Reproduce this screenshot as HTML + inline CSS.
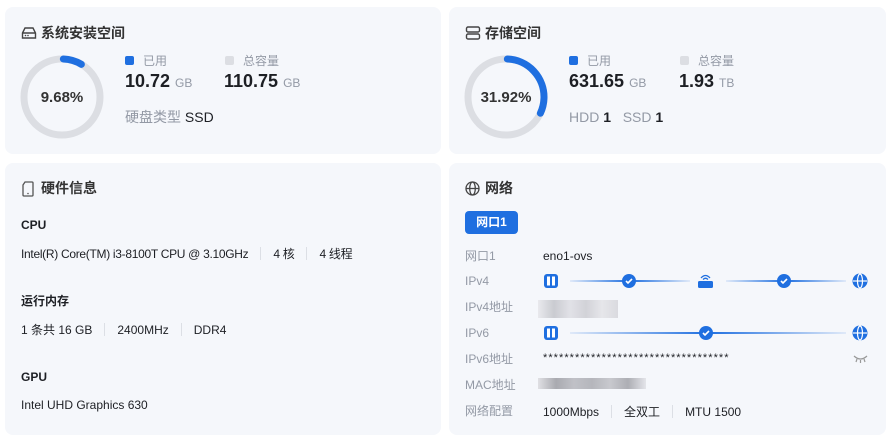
<!DOCTYPE html>
<html><head><meta charset="utf-8"><style>
*{margin:0;padding:0;box-sizing:border-box}
body{width:893px;height:441px;background:#fff;font-family:"Liberation Sans","Noto Sans CJK SC",sans-serif;color:#1d1f24;position:relative;overflow:hidden}
.card{position:absolute;background:#f5f7fb;border-radius:8px}
.a{position:absolute;white-space:nowrap;line-height:1}
.t{font-size:14px;font-weight:bold;color:#333}
.g{color:#9399a5}
.sq{position:absolute;width:9px;height:9px;border-radius:2px}
.v{font-size:18px;font-weight:bold}
.v span{font-size:12px;color:#9399a5;font-weight:normal}
.s{font-size:12px}
.sep{display:inline-block;width:1px;height:13px;background:#dcdfe5;vertical-align:-2px;margin:0 12px}
.lab{font-size:12px;color:#9399a5}
</style></head><body>
<div class="card" style="left:5px;top:7px;width:436px;height:147px"></div>
<div class="card" style="left:449px;top:7px;width:437px;height:147px"></div>
<div class="card" style="left:5px;top:163px;width:436px;height:272px"></div>
<div class="card" style="left:449px;top:163px;width:437px;height:272px"></div>

<svg class="a" style="left:21px;top:26px" width="16" height="14" viewBox="0 0 16 14"><path d="M1.5 7 L4 2 H12 L14.5 7 V12 H1.5 Z M1.5 7 H14.5" fill="none" stroke="#444" stroke-width="1.4"/><circle cx="4.5" cy="9.5" r=".8" fill="#444"/><circle cx="7" cy="9.5" r=".8" fill="#444"/></svg>
<div class="a t" style="left:41px;top:26px">系统安装空间</div>
<svg class="a" style="left:20px;top:55px" width="84" height="84"><circle cx="42" cy="42" r="38" fill="none" stroke="#dcdee3" stroke-width="7"/><circle cx="42" cy="42" r="38" fill="none" stroke="#1f6fe0" stroke-width="7" stroke-linecap="round" stroke-dasharray="19 300" transform="rotate(-88 42 42)"/></svg>
<div class="a" style="left:20px;top:90px;width:84px;text-align:center;font-size:15px;font-weight:bold;color:#333">9.68%</div>
<div class="sq" style="left:125px;top:56px;background:#1f6fe0"></div><div class="a s g" style="left:143px;top:55px">已用</div>
<div class="sq" style="left:225px;top:56px;background:#dcdee3"></div><div class="a s g" style="left:243px;top:55px">总容量</div>
<div class="a v" style="left:125px;top:72px">10.72 <span>GB</span></div>
<div class="a v" style="left:224px;top:72px">110.75 <span>GB</span></div>
<div class="a" style="left:125px;top:110px;font-size:14px"><span class="g">硬盘类型</span> SSD</div>

<svg class="a" style="left:465px;top:26px" width="16" height="14" viewBox="0 0 16 14"><rect x="1.5" y="1" width="13" height="5" rx="1.5" fill="none" stroke="#444" stroke-width="1.4"/><rect x="1.5" y="8" width="13" height="5" rx="1.5" fill="none" stroke="#444" stroke-width="1.4"/></svg>
<div class="a t" style="left:485px;top:26px">存储空间</div>
<svg class="a" style="left:464px;top:55px" width="84" height="84"><circle cx="42" cy="42" r="38" fill="none" stroke="#dcdee3" stroke-width="7"/><circle cx="42" cy="42" r="38" fill="none" stroke="#1f6fe0" stroke-width="7" stroke-linecap="round" stroke-dasharray="75 300" transform="rotate(-88 42 42)"/></svg>
<div class="a" style="left:464px;top:90px;width:84px;text-align:center;font-size:15px;font-weight:bold;color:#333">31.92%</div>
<div class="sq" style="left:569px;top:56px;background:#1f6fe0"></div><div class="a s g" style="left:587px;top:55px">已用</div>
<div class="sq" style="left:680px;top:56px;background:#dcdee3"></div><div class="a s g" style="left:698px;top:55px">总容量</div>
<div class="a v" style="left:569px;top:72px">631.65 <span>GB</span></div>
<div class="a v" style="left:679px;top:72px">1.93 <span>TB</span></div>
<div class="a" style="left:569px;top:110px;font-size:14px"><span class="g">HDD</span> <b>1</b>&nbsp;&nbsp; <span class="g">SSD</span> <b>1</b></div>

<svg class="a" style="left:22px;top:181px" width="12" height="16" viewBox="0 0 12 16"><path d="M3 1 H10 Q11 1 11 2 V14 Q11 15 10 15 H2 Q1 15 1 14 V4 Z" fill="none" stroke="#555" stroke-width="1.3"/><circle cx="6" cy="12.5" r=".8" fill="#555"/></svg>
<div class="a t" style="left:41px;top:181px">硬件信息</div>
<div class="a" style="left:21px;top:219px;font-size:12px;font-weight:bold">CPU</div>
<div class="a s" style="left:21px;top:247px;letter-spacing:-.3px">Intel(R) Core(TM) i3-8100T CPU @ 3.10GHz<span class="sep"></span>4 核<span class="sep"></span>4 线程</div>
<div class="a" style="left:21px;top:295px;font-size:12px;font-weight:bold">运行内存</div>
<div class="a s" style="left:21px;top:323px">1 条共 16 GB<span class="sep"></span>2400MHz<span class="sep"></span>DDR4</div>
<div class="a" style="left:21px;top:371px;font-size:12px;font-weight:bold">GPU</div>
<div class="a s" style="left:21px;top:399px">Intel UHD Graphics 630</div>

<svg class="a" style="left:465px;top:181px" width="15" height="15" viewBox="0 0 15 15" fill="none" stroke="#444" stroke-width="1.3"><circle cx="7.5" cy="7.5" r="6.5"/><ellipse cx="7.5" cy="7.5" rx="2.8" ry="6.5"/><path d="M1 7.5H14"/></svg>
<div class="a t" style="left:485px;top:181px">网络</div>
<div class="a" style="left:465px;top:211px;width:53px;height:23px;background:#1f6fe0;border-radius:4px;color:#fff;font-size:12px;font-weight:bold;text-align:center;line-height:23px">网口1</div>
<div class="a lab" style="left:465px;top:250px">网口1</div><div class="a s" style="left:543px;top:250px">eno1-ovs</div>
<div class="a lab" style="left:465px;top:275px">IPv4</div>
<div class="a lab" style="left:465px;top:301px">IPv4地址</div>
<div class="a" style="left:538px;top:300px;width:80px;height:18px;background:linear-gradient(90deg,#e6e6ea,#bfc0c6,#dcdce2,#c9c9cf,#e2e2e6,#d3d3d8);opacity:.8"></div>
<div class="a lab" style="left:465px;top:327px">IPv6</div>
<div class="a lab" style="left:465px;top:353px">IPv6地址</div>
<div class="a s" style="left:543px;top:353px;font-size:11px;letter-spacing:1.05px">***********************************</div>
<svg class="a" style="left:853px;top:355px" width="15" height="8" viewBox="0 0 15 8" fill="none" stroke="#999" stroke-width="1.2"><path d="M1 1 Q7.5 7 14 1 M4 4 L3 7 M7.5 5 V8 M11 4 L12 7"/></svg>
<div class="a lab" style="left:465px;top:379px">MAC地址</div>
<div class="a" style="left:538px;top:378px;width:108px;height:11px;background:linear-gradient(90deg,#e0e0e4,#a9aab0,#c0c1c7,#b5b6bc,#c8c9ce,#adaeb4,#e4e5ea)"></div>
<div class="a lab" style="left:465px;top:405px">网络配置</div>
<div class="a s" style="left:543px;top:405px">1000Mbps<span class="sep"></span>全双工<span class="sep"></span>MTU 1500</div>

<svg class="a" style="left:540px;top:270px" width="330" height="80">
<defs><linearGradient id="l1" x1="0" x2="1"><stop offset="0" stop-color="#1f6fe0" stop-opacity=".1"/><stop offset=".5" stop-color="#1f6fe0"/><stop offset="1" stop-color="#1f6fe0" stop-opacity=".1"/></linearGradient></defs>
<rect x="4" y="4" width="14" height="14" rx="3" fill="#1f6fe0"/><rect x="7" y="6.5" width="3" height="9" fill="#fff"/><rect x="12" y="6.5" width="3" height="9" fill="#fff"/>
<rect x="30" y="10" width="120" height="2" fill="url(#l1)"/>
<rect x="186" y="10" width="120" height="2" fill="url(#l1)"/>
<circle cx="89" cy="11" r="7" fill="#1f6fe0"/><path d="M86 11l2 2 4-4" stroke="#fff" stroke-width="1.6" fill="none"/>
<circle cx="244" cy="11" r="7" fill="#1f6fe0"/><path d="M241 11l2 2 4-4" stroke="#fff" stroke-width="1.6" fill="none"/>
<rect x="158" y="11" width="15" height="7" rx="1.5" fill="#1f6fe0"/><path d="M161 8 Q165.5 3 170 8 M163 9.5 Q165.5 7 168 9.5" stroke="#1f6fe0" stroke-width="1.3" fill="none"/>
<circle cx="320" cy="11" r="7.5" fill="#1f6fe0"/><ellipse cx="320" cy="11" rx="2.5" ry="7" fill="none" stroke="#fff" stroke-width="1.2"/><path d="M313 11H327" stroke="#fff" stroke-width="1.2"/>
<g transform="translate(0,52)"><rect x="4" y="4" width="14" height="14" rx="3" fill="#1f6fe0"/><rect x="7" y="6.5" width="3" height="9" fill="#fff"/><rect x="12" y="6.5" width="3" height="9" fill="#fff"/>
<rect x="30" y="10" width="276" height="2" fill="url(#l1)"/>
<circle cx="166" cy="11" r="7" fill="#1f6fe0"/><path d="M163 11l2 2 4-4" stroke="#fff" stroke-width="1.6" fill="none"/>
<circle cx="320" cy="11" r="7.5" fill="#1f6fe0"/><ellipse cx="320" cy="11" rx="2.5" ry="7" fill="none" stroke="#fff" stroke-width="1.2"/><path d="M313 11H327" stroke="#fff" stroke-width="1.2"/></g>
</svg>
</body></html>
